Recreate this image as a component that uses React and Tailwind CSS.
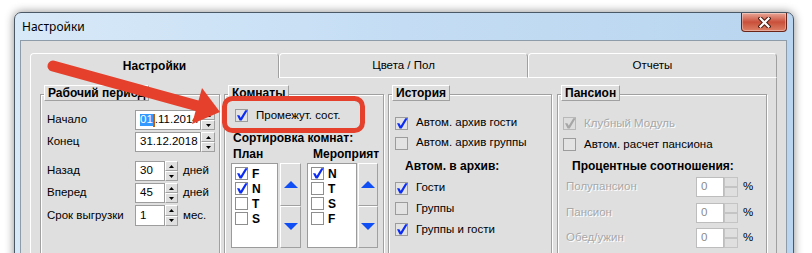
import React from "react";

const raised = "border border-t-white border-l-white border-b-[#a0a0a0] border-r-[#a0a0a0]";
const dim = "text-[#a8a8a8] [text-shadow:1px_1px_0_#ffffff]";

function CheckMark({ color }) {
  return (
    <svg width="13" height="13" viewBox="0 0 13 13" className="block -m-px">
      <polygon points="2,6.2 4.4,6.2 5.7,8.7 10.3,1.3 12.7,1.3 6.7,11.4 4.6,11.4" fill={color} />
    </svg>
  );
}

function Box({ checked, white, disabled }) {
  const cls = white
    ? "bg-white border-[#8e8e8e]"
    : disabled
    ? "bg-[#dddddd] border-[#b8b8b8]"
    : "bg-[#e3e3e3] border-[#9c9c9c]";
  return (
    <div className={`w-[13px] h-[13px] shrink-0 border ${cls}`}>
      {checked && <CheckMark color={disabled ? "#a6a6a6" : "#0b2cf5"} />}
    </div>
  );
}

function Tri({ up, color = "#000", w = 5, h = 3 }) {
  const pts = up ? `0,${h} ${w},${h} ${w / 2},0` : `0,0 ${w},0 ${w / 2},${h}`;
  return (
    <svg width={w} height={h} viewBox={`0 0 ${w} ${h}`} className="block">
      <polygon points={pts} fill={color} />
    </svg>
  );
}

function Spin({ wide }) {
  return (
    <div className={`${wide ? "w-[14px]" : "w-[13px]"} h-full flex flex-col`}>
      <div className={`flex-1 flex items-center justify-center bg-[#dfdfdf] ${raised}`}>
        <Tri up />
      </div>
      <div className={`flex-1 flex items-center justify-center bg-[#dfdfdf] ${raised}`}>
        <Tri />
      </div>
    </div>
  );
}

function Field({ w, children }) {
  return (
    <div className={`${w} h-full bg-white border border-[#9d9d9d] flex items-center pl-[4px] text-[11.5px] leading-none`}>
      {children}
    </div>
  );
}

function Group({ title, className, children }) {
  return (
    <div className={`border border-[#a0a0a0] shadow-[inset_1px_1px_0_#ffffff,1px_1px_0_#ffffff] h-[175px] flex flex-col ${className}`}>
      <div className={`-mt-[10px] ml-[3px] w-fit h-[16px] px-[3px] bg-[#dfdfdf] font-bold text-[12px] leading-[14px] ${raised}`}>
        {title}
      </div>
      {children}
    </div>
  );
}

function Row({ label, className = "", children }) {
  return (
    <div className={`flex items-center h-[20px] ${className}`}>
      <span className="w-[88px]">{label}</span>
      {children}
    </div>
  );
}

function ListBox({ w, items }) {
  return (
    <div className={`${w} h-[85px] bg-white border border-[#9b9b9b] pt-[2px] pl-[3px] flex flex-col`}>
      {items.map(([t, c]) => (
        <div key={t} className="h-[15px] flex items-center gap-[4px] font-bold text-[12px]">
          <Box white checked={c} />
          <span>{t}</span>
        </div>
      ))}
    </div>
  );
}

function MoveButtons({ w }) {
  return (
    <div className={`${w} h-[85px] flex flex-col`}>
      <div className={`flex-1 flex items-center justify-center bg-[#dfdfdf] ${raised}`}>
        <Tri up color="#0f4df5" w={14} h={7} />
      </div>
      <div className={`flex-1 flex items-center justify-center bg-[#dfdfdf] ${raised}`}>
        <Tri color="#0f4df5" w={14} h={7} />
      </div>
    </div>
  );
}

function CheckRow({ checked, disabled, label, className = "" }) {
  return (
    <div className={`flex items-center gap-[8px] ${className}`}>
      <Box checked={checked} disabled={disabled} />
      <span className={disabled ? dim : ""}>{label}</span>
    </div>
  );
}

function PercentRow({ label, className = "" }) {
  return (
    <div className={`flex items-center h-[20px] ${className}`}>
      <span className={`w-[130px] ${dim}`}>{label}</span>
      <div className="w-[28px] h-full bg-white border border-[#bdbdbd] flex items-center pl-[4px] text-[#8a8a8a]">0</div>
      <div className="w-[14px] h-full flex flex-col border border-[#c4c4c4]">
        <div className="flex-1 border-b-2 border-[#c4c4c4]" />
        <div className="flex-1" />
      </div>
      <span className="ml-[5px]">%</span>
    </div>
  );
}

export default function App() {
  return (
    <div className="relative w-[812px] h-[253px] overflow-hidden bg-white pt-[12px] pl-[14px] font-['Liberation_Sans',Arial,sans-serif] text-[11.5px] text-black">
      <div className="w-[780px] h-[262px] rounded-t-[7px] border border-[#4b5866] bg-gradient-to-r from-[#d8e9f8] via-[#c4ddf4] to-[#b9d5ef] shadow-[0_0_10px_rgba(0,0,0,0.45)] flex flex-col">
        <div className="h-[27px] flex justify-between">
          <span className="self-center pl-[7px] text-[12px] font-['Noto_Sans',sans-serif]">Настройки</span>
          <div className="mr-[6px] w-[46px] h-[19px] rounded-b-[4px] border border-t-0 border-[#6b2418] bg-gradient-to-b from-[#e8a597] via-[#c9503a] to-[#dc7f66] shadow-[inset_0_0_0_1px_rgba(255,255,255,0.35)] flex items-center justify-center">
            <svg width="13" height="11" viewBox="0 0 13 11">
              <path d="M2.5 1.5 L10.5 9.5 M10.5 1.5 L2.5 9.5" stroke="#4a1a10" strokeWidth="4.2" strokeLinecap="square" />
              <path d="M2.5 1.5 L10.5 9.5 M10.5 1.5 L2.5 9.5" stroke="#ffffff" strokeWidth="2.2" strokeLinecap="square" />
            </svg>
          </div>
        </div>

        <div className="flex-1 ml-[5px] mr-[6px] border border-[#8e9caa] bg-[#dfdfdf] pt-[12px] pl-[9px] pr-[9px] flex flex-col">
          <div className="flex h-[25px]">
            <div className="w-[249px] rounded-t-[4px] border-t border-l border-r border-t-white border-l-white border-r-[#a0a0a0] flex items-center justify-center font-bold text-[12px]">
              Настройки
            </div>
            <div className="w-[249px] rounded-t-[4px] border border-t-white border-l-white border-b-white border-r-[#a0a0a0] flex items-center justify-center text-[11.5px]">
              Цвета / Пол
            </div>
            <div className="w-[249px] rounded-t-[4px] border border-t-white border-l-white border-b-white border-r-[#a0a0a0] flex items-center justify-center text-[11.5px]">
              Отчеты
            </div>
          </div>

          <div className="flex-1 border-l border-r border-l-white border-r-[#a0a0a0] pt-[16px] pl-[9px] pr-[9px] flex">
            <Group title="Рабочий период" className="w-[180px]">
              <div className="flex flex-col pl-[6px] mt-[9px]">
                <Row label="Начало">
                  <Field w="w-[66px]">
                    <span className="bg-[#3399ff] text-white">01</span>
                    <span className="w-[2px] h-[13px] bg-[#c0600e]" />
                    <span>.11.2014</span>
                  </Field>
                  <Spin wide />
                </Row>
                <Row label="Конец" className="mt-[2px]">
                  <Field w="w-[66px]">31.12.2018</Field>
                  <Spin wide />
                </Row>
                <Row label="Назад" className="mt-[9px]">
                  <Field w="w-[30px]">30</Field>
                  <Spin />
                  <span className="ml-[5px]">дней</span>
                </Row>
                <Row label="Вперед" className="mt-[2px]">
                  <Field w="w-[30px]">45</Field>
                  <Spin />
                  <span className="ml-[5px]">дней</span>
                </Row>
                <Row label="Срок выгрузки" className="mt-[2px] h-[21px]">
                  <Field w="w-[30px]">1</Field>
                  <Spin />
                  <span className="ml-[5px]">мес.</span>
                </Row>
              </div>
            </Group>

            <Group title="Комнаты" className="w-[160px] ml-[4px]">
              <div className="flex flex-col pl-[10px]">
                <CheckRow checked label="Промежут. сост." className="mt-[8px] h-[13px]" />
                <div className="mt-[9px] -ml-[2px] font-bold text-[12px] leading-[14px]">Сортировка комнат:</div>
                <div className="mt-[2px] -ml-[4px] flex">
                  <div className="flex flex-col">
                    <span className="ml-[2px] font-bold text-[12px] leading-[14px]">План</span>
                    <div className="mt-[2px] flex gap-[2px]">
                      <ListBox w="w-[47px]" items={[["F", true], ["N", true], ["T", false], ["S", false]]} />
                      <MoveButtons w="w-[21px]" />
                    </div>
                  </div>
                  <div className="ml-[6px] flex flex-col">
                    <span className="ml-[6px] font-bold text-[12px] leading-[14px]">Мероприят</span>
                    <div className="mt-[2px] flex gap-[1px]">
                      <ListBox w="w-[50px]" items={[["N", true], ["T", false], ["S", false], ["F", false]]} />
                      <MoveButtons w="w-[20px]" />
                    </div>
                  </div>
                </div>
              </div>
            </Group>

            <Group title="История" className="w-[164px] ml-[4px]">
              <div className="flex flex-col pl-[6px]">
                <CheckRow checked label="Автом. архив гости" className="mt-[12px] h-[20px]" />
                <CheckRow label="Автом. архив группы" className="h-[20px]" />
                <div className="h-[25px] flex items-center ml-[10px] font-bold text-[12px]">Автом. в архив:</div>
                <CheckRow checked label="Гости" className="h-[20px]" />
                <CheckRow label="Группы" className="h-[21px]" />
                <CheckRow checked label="Группы и гости" className="h-[21px]" />
              </div>
            </Group>

            <Group title="Пансион" className="w-[210px] ml-[5px]">
              <div className="flex flex-col pl-[5px]">
                <CheckRow checked disabled label="Клубный Модуль" className="mt-[12px] h-[21px]" />
                <CheckRow label="Автом. расчет пансиона" className="h-[21px]" />
                <div className="h-[21px] flex items-center ml-[9px] font-bold text-[12px]">Процентные соотношения:</div>
                <PercentRow label="Полупансион" className="mt-[1px] ml-[3px]" />
                <PercentRow label="Пансион" className="mt-[6px] ml-[3px]" />
                <PercentRow label="Обед/ужин" className="mt-[5px] ml-[3px]" />
              </div>
            </Group>
          </div>
        </div>
      </div>

      <svg className="absolute left-0 top-0 pointer-events-none" width="812" height="253" viewBox="0 0 812 253">
        <line x1="53" y1="66" x2="198" y2="106" stroke="#e5402c" strokeWidth="11" strokeLinecap="round" />
        <polygon points="202,88 220,112 192,124" fill="#e5402c" />
        <rect x="224.5" y="98.5" width="138" height="32" rx="8" fill="none" stroke="#e5402c" strokeWidth="5" />
      </svg>
    </div>
  );
}
